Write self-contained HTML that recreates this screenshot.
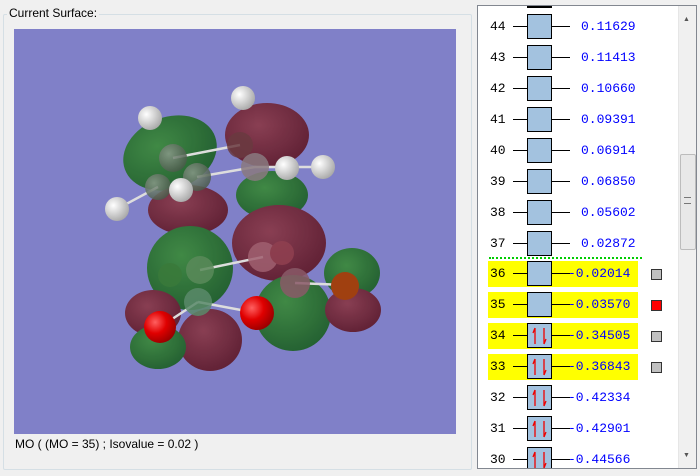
<!DOCTYPE html>
<html><head><style>
body{margin:0;width:700px;height:476px;background:#f0f0f0;position:relative;overflow:hidden;font-family:"Liberation Sans",sans-serif;}
.gb{position:absolute;left:3px;top:14px;width:467px;height:454px;border:1px solid #d5dfe5;border-radius:2px;}
.lbl{position:absolute;left:7px;top:6px;font-size:12px;background:#f0f0f0;padding:0 2px;color:#000;}
.cv{position:absolute;left:14px;top:29px;width:442px;height:405px;background:#8080c8;}
.cap{position:absolute;left:15px;top:437px;font-size:12px;}
.lst{position:absolute;left:477px;top:5px;width:218px;height:462px;border:1px solid #828790;background:#fff;overflow:hidden;}
.sb{position:absolute;right:0;top:0;width:17px;height:462px;background:#f0f0f0;border-left:1px solid #e6e6e6;}
.th{position:absolute;left:1px;top:148px;width:14px;height:94px;background:#e8e8e8;border:1px solid #bcbcbc;border-radius:2px;}
.row{position:absolute;left:0;height:26px;font-family:"Liberation Mono",monospace;font-size:13px;}
.hl{position:absolute;left:10px;width:150px;height:26px;background:#ffff00;}
.n{position:absolute;left:12px;top:5px;}
.ln{position:absolute;left:35px;top:12px;width:57px;height:1px;background:#000;}
.bx{position:absolute;left:49px;top:0;width:23px;height:23px;background:#a3c2df;border:1px solid #000;}
.v{position:absolute;left:103px;top:5px;color:#0000ff;}
.v.ng{left:90px;}
.sq{position:absolute;left:173px;top:8px;width:9px;height:9px;background:#c0c0c0;border:1px solid #333;}
</style></head><body>
<div class="gb"></div><div class="lbl">Current Surface:</div>
<div class="cv">
<svg width="442" height="405" viewBox="14 29 442 405">
<defs>
<radialGradient id="g" cx="40%" cy="35%" r="70%"><stop offset="0" stop-color="#3c8a3c"/><stop offset="1" stop-color="#1d5e26"/></radialGradient>
<radialGradient id="r" cx="40%" cy="35%" r="70%"><stop offset="0" stop-color="#8a3a4a"/><stop offset="1" stop-color="#5e1a2a"/></radialGradient>
<radialGradient id="h" cx="35%" cy="35%" r="70%"><stop offset="0" stop-color="#fff"/><stop offset="1" stop-color="#a8a8a8"/></radialGradient>
<radialGradient id="o" cx="35%" cy="35%" r="70%"><stop offset="0" stop-color="#ff6060"/><stop offset="0.5" stop-color="#e00000"/><stop offset="1" stop-color="#900"/></radialGradient>
<radialGradient id="c" cx="35%" cy="35%" r="70%"><stop offset="0" stop-color="#8a9a8a"/><stop offset="1" stop-color="#4a5a4a"/></radialGradient>
</defs>
<g opacity="0.93">
<ellipse cx="170" cy="153" rx="48" ry="36" fill="url(#g)" transform="rotate(-20 170 153)"/>
<ellipse cx="267" cy="135" rx="42" ry="32" fill="url(#r)"/>
<ellipse cx="272" cy="195" rx="36" ry="24" fill="url(#g)"/>
<ellipse cx="188" cy="210" rx="40" ry="25" fill="url(#r)"/>
<ellipse cx="190" cy="268" rx="43" ry="42" fill="url(#g)"/>
<ellipse cx="279" cy="243" rx="47" ry="38" fill="url(#r)"/>
<ellipse cx="293" cy="313" rx="38" ry="38" fill="url(#g)"/>
<ellipse cx="352" cy="273" rx="28" ry="25" fill="url(#g)"/>
<ellipse cx="353" cy="310" rx="28" ry="22" fill="url(#r)"/>
<ellipse cx="210" cy="340" rx="32" ry="31" fill="url(#r)"/>
<ellipse cx="153" cy="313" rx="28" ry="23" fill="url(#r)"/>
<ellipse cx="158" cy="347" rx="28" ry="22" fill="url(#g)"/>
</g>
<g stroke="#ddd" stroke-width="2.5">
<line x1="173" y1="158" x2="240" y2="145"/><line x1="197" y1="177" x2="255" y2="167"/><line x1="255" y1="167" x2="323" y2="167"/>
<line x1="158" y1="187" x2="117" y2="209"/><line x1="200" y1="270" x2="263" y2="257"/><line x1="295" y1="283" x2="345" y2="285"/>
<line x1="198" y1="302" x2="257" y2="313"/><line x1="198" y1="302" x2="160" y2="327"/>
</g>
<g opacity="0.85">
<circle cx="173" cy="158" r="14" fill="url(#c)"/><circle cx="158" cy="187" r="13" fill="url(#c)"/><circle cx="197" cy="177" r="14" fill="url(#c)"/>
<circle cx="240" cy="145" r="13" fill="#6a3a40"/><circle cx="255" cy="167" r="14" fill="#8a7a80"/>
<circle cx="200" cy="270" r="14" fill="#5a8a5a"/><circle cx="198" cy="302" r="14" fill="#5a8a6a"/><circle cx="170" cy="275" r="12" fill="#3a7a3a"/>
<circle cx="263" cy="257" r="15" fill="#a06070"/><circle cx="282" cy="253" r="12" fill="#904050"/><circle cx="295" cy="283" r="15" fill="#8a5a68"/>
</g>
<circle cx="243" cy="98" r="12" fill="url(#h)"/><circle cx="150" cy="118" r="12" fill="url(#h)"/><circle cx="287" cy="168" r="12" fill="url(#h)"/>
<circle cx="323" cy="167" r="12" fill="url(#h)"/><circle cx="181" cy="190" r="12" fill="url(#h)"/><circle cx="117" cy="209" r="12" fill="url(#h)"/>
<circle cx="257" cy="313" r="17" fill="url(#o)"/><circle cx="160" cy="327" r="16" fill="url(#o)"/><circle cx="345" cy="286" r="14" fill="#a04010"/>
</svg>
</div>
<div class="cap">MO ( (MO = 35) ; Isovalue = 0.02 )</div>
<div class="lst">
<div style="position:absolute;left:49px;top:0;width:25px;height:2px;background:#000"></div>
<div class="row" style="top:8px"><div class="n">44</div><div class="ln"></div><div class="bx"></div><div class="v">0.11629</div></div>
<div class="row" style="top:39px"><div class="n">43</div><div class="ln"></div><div class="bx"></div><div class="v">0.11413</div></div>
<div class="row" style="top:70px"><div class="n">42</div><div class="ln"></div><div class="bx"></div><div class="v">0.10660</div></div>
<div class="row" style="top:101px"><div class="n">41</div><div class="ln"></div><div class="bx"></div><div class="v">0.09391</div></div>
<div class="row" style="top:132px"><div class="n">40</div><div class="ln"></div><div class="bx"></div><div class="v">0.06914</div></div>
<div class="row" style="top:163px"><div class="n">39</div><div class="ln"></div><div class="bx"></div><div class="v">0.06850</div></div>
<div class="row" style="top:194px"><div class="n">38</div><div class="ln"></div><div class="bx"></div><div class="v">0.05602</div></div>
<div class="row" style="top:225px"><div class="n">37</div><div class="ln"></div><div class="bx"></div><div class="v">0.02872</div></div>
<div style="position:absolute;left:11px;top:251px;width:153px;border-top:2px dotted #00cc00"></div>
<div class="row" style="top:255px;width:200px"><div class="hl" style="top:0"></div><div class="n">36</div><div class="ln"></div><div class="bx"></div><div class="v ng">-0.02014</div><div class="sq"></div></div>
<div class="row" style="top:286px;width:200px"><div class="hl" style="top:0"></div><div class="n">35</div><div class="ln"></div><div class="bx"></div><div class="v ng">-0.03570</div><div class="sq" style="background:#f00"></div></div>
<div class="row" style="top:317px;width:200px"><div class="hl" style="top:0"></div><div class="n">34</div><div class="ln"></div><div class="bx"><svg width="23" height="23"><path d="M7 20V4M7 4l-2 5M16 4v16M16 20l2-5" stroke="#e00" stroke-width="1.3" fill="none"/></svg></div><div class="v ng">-0.34505</div><div class="sq"></div></div>
<div class="row" style="top:348px;width:200px"><div class="hl" style="top:0"></div><div class="n">33</div><div class="ln"></div><div class="bx"><svg width="23" height="23"><path d="M7 20V4M7 4l-2 5M16 4v16M16 20l2-5" stroke="#e00" stroke-width="1.3" fill="none"/></svg></div><div class="v ng">-0.36843</div><div class="sq"></div></div>
<div class="row" style="top:379px;width:200px"><div class="n">32</div><div class="ln"></div><div class="bx"><svg width="23" height="23"><path d="M7 20V4M7 4l-2 5M16 4v16M16 20l2-5" stroke="#e00" stroke-width="1.3" fill="none"/></svg></div><div class="v ng">-0.42334</div></div>
<div class="row" style="top:410px;width:200px"><div class="n">31</div><div class="ln"></div><div class="bx"><svg width="23" height="23"><path d="M7 20V4M7 4l-2 5M16 4v16M16 20l2-5" stroke="#e00" stroke-width="1.3" fill="none"/></svg></div><div class="v ng">-0.42901</div></div>
<div class="row" style="top:441px;width:200px"><div class="n">30</div><div class="ln"></div><div class="bx"><svg width="23" height="23"><path d="M7 20V4M7 4l-2 5M16 4v16M16 20l2-5" stroke="#e00" stroke-width="1.3" fill="none"/></svg></div><div class="v ng">-0.44566</div></div>
<div class="sb"><div style="position:absolute;left:4px;top:10px;font-size:7px;color:#555">▲</div><div class="th"><div style="position:absolute;left:3px;top:42px;width:7px;height:5px;border-top:1px solid #777;border-bottom:1px solid #777"></div></div><div style="position:absolute;left:4px;top:446px;font-size:7px;color:#555">▼</div></div>
</div>
</body></html>
